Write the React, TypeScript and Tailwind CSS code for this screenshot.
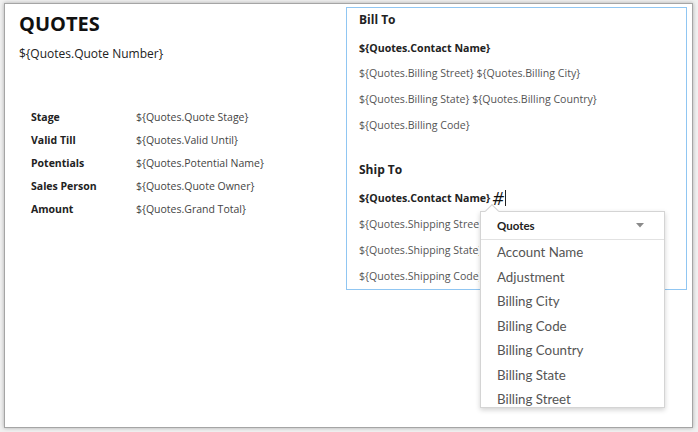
const docFont = { fontFamily: '"Open Sans", "Liberation Sans", sans-serif' };
const menuFont = { fontFamily: 'Lato, "Open Sans", sans-serif' };

const details = [
  ['Stage', '${Quotes.Quote Stage}'],
  ['Valid Till', '${Quotes.Valid Until}'],
  ['Potentials', '${Quotes.Potential Name}'],
  ['Sales Person', '${Quotes.Quote Owner}'],
  ['Amount', '${Quotes.Grand Total}'],
];

const fields = [
  'Account Name',
  'Adjustment',
  'Billing City',
  'Billing Code',
  'Billing Country',
  'Billing State',
  'Billing Street',
];

function FieldMenu() {
  return (
    <div
      className="absolute left-[133px] top-[203px] w-[185px] h-[197px] bg-white border border-[#d4d4d4] shadow-[0_2px_5px_rgba(0,0,0,0.18)]"
      style={menuFont}
    >
      {/* notch pointing at the cursor */}
      <div className="absolute left-[6px] top-[-6px] w-[10px] h-[10px] rotate-45 bg-white border-l border-t border-[#d4d4d4]" />
      <div className="relative flex items-center justify-between h-[28px] pl-[16px] pr-[20px] border-b border-[#e2e2e2]">
        <span className="text-[11.5px] font-bold text-[#222]">Quotes</span>
        <svg width="8" height="5" viewBox="0 0 8 5">
          <path d="M0 0h8L4 4.5z" fill="#8a8a8a" />
        </svg>
      </div>
      <div className="h-[167px] overflow-hidden">
        {fields.map((f) => (
          <div key={f} className="h-[24.5px] flex items-center pl-[16px] text-[13.3px] text-[#555]">
            {f}
          </div>
        ))}
      </div>
    </div>
  );
}

export default function App() {
  return (
    <div className="w-[698px] h-[432px] bg-[#f1f1f1] pl-[4px] pt-[3px] pr-[5px] pb-[4px]" style={docFont}>
      <div className="h-full bg-white border border-[#a5a5a5] shadow-[0_0_4px_rgba(0,0,0,0.28)] flex pt-[1px] pl-[1px]">
        {/* Left column */}
        <div className="w-[340px] pl-[13px]">
          <h1 className="mt-[6px] text-[20px] leading-[26px] font-bold text-[#111]">QUOTES</h1>
          <div className="mt-[9px] text-[12px] leading-[16px] text-[#222]">{'${Quotes.Quote Number}'}</div>
          <div className="mt-[44px] pl-[12px]">
            {details.map(([label, value]) => (
              <div key={label} className="flex h-[23px] items-center text-[10.5px]">
                <span className="w-[105px] font-bold text-[#222]">{label}</span>
                <span className="text-[#444]">{value}</span>
              </div>
            ))}
          </div>
        </div>

        {/* Right column: address block */}
        <div className="relative mt-[2px] w-[341px] h-[283px] self-start border border-[#90c6f2] pl-[12px] pt-[4px] text-[10.6px] leading-[16px]">
          <div className="text-[12px] font-bold text-[#222]">Bill To</div>
          <div className="mt-[12px] font-bold text-[#222]">{'${Quotes.Contact Name}'}</div>
          <div className="mt-[9px] text-[#555]">{'${Quotes.Billing Street} ${Quotes.Billing City}'}</div>
          <div className="mt-[10px] text-[#555]">{'${Quotes.Billing State} ${Quotes.Billing Country}'}</div>
          <div className="mt-[10px] text-[#555]">{'${Quotes.Billing Code}'}</div>

          <div className="mt-[29px] text-[12px] font-bold text-[#222]">Ship To</div>
          <div className="mt-[12px] h-[16px] flex items-center font-bold text-[#222]">
            <span>{'${Quotes.Contact Name}'}</span>
            <span className="ml-[2px] text-[18px] font-normal italic leading-[16px] text-[#111]">#</span>
            <span className="ml-[1px] w-[1px] h-[16px] bg-[#222]" />
          </div>
          <div className="mt-[10px] w-[120px] overflow-hidden whitespace-nowrap text-[#555]">{'${Quotes.Shipping Street} ${Quotes.Shipping City}'}</div>
          <div className="mt-[10px] w-[120px] overflow-hidden whitespace-nowrap text-[#555]">{'${Quotes.Shipping State} ${Quotes.Shipping Country}'}</div>
          <div className="mt-[10px] w-[120px] overflow-hidden whitespace-nowrap text-[#555]">{'${Quotes.Shipping Code}'}</div>

          <FieldMenu />
        </div>
      </div>
    </div>
  );
}
